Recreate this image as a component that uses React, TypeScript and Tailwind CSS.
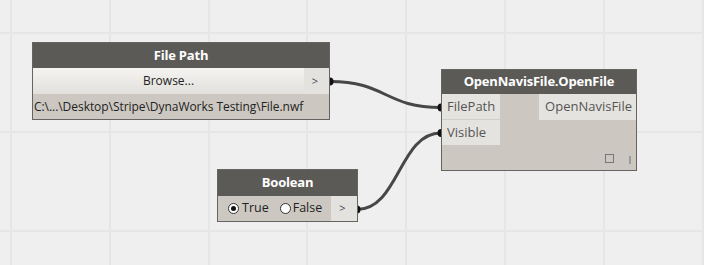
import React from "react";

const font = { fontFamily: '"Open Sans", "Liberation Sans", sans-serif' };

function Grid() {
  const xs: number[] = [];
  const ys: number[] = [];
  for (let i = 0; i < 8; i++) xs.push(10 + i * 98.8);
  for (let i = 0; i < 3; i++) ys.push(32 + i * 98.8);
  return (
    <svg className="absolute inset-0" width={704} height={265}>
      {xs.map((x) => (
        <rect key={"x" + x} x={Math.round(x)} y={0} width={2} height={265} fill="#e6e6e6" />
      ))}
      {ys.map((y) => (
        <rect key={"y" + y} x={0} y={Math.round(y)} width={704} height={2} fill="#e6e6e6" />
      ))}
    </svg>
  );
}

function Wires() {
  return (
    <svg className="absolute inset-0" width={704} height={265}>
      <path d="M330 81.5 C386 81.5, 385 107.5, 441 107.5" stroke="#474747" strokeWidth={3} fill="none" />
      <path d="M357 209.5 C399 209.5, 399 133, 441 133" stroke="#474747" strokeWidth={3} fill="none" />
      <ellipse cx={330} cy={81.5} rx={3.5} ry={4} fill="#111" />
      <ellipse cx={441} cy={107.5} rx={3.5} ry={4} fill="#111" />
      <ellipse cx={441} cy={133} rx={3.5} ry={4} fill="#111" />
      <ellipse cx={357} cy={209.5} rx={3.5} ry={4} fill="#111" />
    </svg>
  );
}

function Radio({ checked }: { checked?: boolean }) {
  return (
    <span className="w-[11px] h-[11px] rounded-full border border-[#333] bg-white flex items-center justify-center shrink-0">
      {checked && <span className="w-[5px] h-[5px] rounded-full bg-[#111]" />}
    </span>
  );
}

export default function App() {
  return (
    <div className="relative w-[704px] h-[265px] bg-[#efefef] overflow-hidden" style={font}>
      <Grid />
      <Wires />

      {/* File Path node */}
      <div className="absolute left-[32px] top-[42px] w-[298px] border border-[#666462] bg-[#ccc8c1] flex flex-col">
        <div className="h-[25px] bg-[#5c5a57] text-white font-bold text-[13px] tracking-[-0.2px] flex items-center justify-center">
          File Path
        </div>
        <div className="h-[26px] flex">
          <div className="flex-1 bg-gradient-to-b from-[#f5f4f2] to-[#e2e0dc] text-[#222] text-[12px] flex items-center justify-center">
            Browse...
          </div>
          <div className="w-[25px] bg-[#e4e2de] text-[#445] text-[11px] flex items-center justify-center pr-[3px]">
            &gt;
          </div>
        </div>
        <div className="h-[25px] text-[#222] text-[12px] flex items-center pl-[1px] whitespace-nowrap tracking-[-0.05px]">
          C:\...\Desktop\Stripe\DynaWorks Testing\File.nwf
        </div>
      </div>

      {/* OpenNavisFile.OpenFile node */}
      <div className="absolute left-[441px] top-[69px] w-[196px] h-[102px] border border-[#666462] bg-[#ccc8c1] flex flex-col">
        <div className="h-[24px] bg-[#5c5a57] text-white font-bold text-[13px] tracking-[-0.2px] flex items-center justify-center">
          OpenNavisFile.OpenFile
        </div>
        <div className="flex">
          <div className="flex flex-col w-[58px]">
            <div className="h-[26px] bg-[#e5e3df] border-b border-[#d2cec8] text-[#555] text-[13px] flex items-center pl-[5px]">
              FilePath
            </div>
            <div className="h-[25px] bg-[#e5e3df] text-[#555] text-[13px] flex items-center pl-[5px]">
              Visible
            </div>
          </div>
          <div className="flex-1" />
          <div className="w-[97px] h-[26px] bg-[#e5e3df] text-[#555] text-[13px] flex items-center justify-end pr-[4px]">
            OpenNavisFile
          </div>
        </div>
        <div className="flex-1 flex items-end justify-end pb-[6px] pr-[5px] gap-[15px]">
          <span className="w-[9px] h-[9px] border border-[#777] mb-[1px]" />
          <span className="flex h-[8px]">
            <span className="w-[1px] h-full bg-[#7f9dbf]" />
            <span className="w-[1px] h-full bg-[#a89c84]" />
          </span>
        </div>
      </div>

      {/* Boolean node */}
      <div className="absolute left-[217px] top-[169px] w-[141px] border border-[#666462] bg-[#ccc8c1] flex flex-col">
        <div className="h-[26px] bg-[#5c5a57] text-white font-bold text-[13px] tracking-[-0.2px] flex items-center justify-center">
          Boolean
        </div>
        <div className="h-[25px] flex">
          <div className="flex-1 flex items-center pl-[10px] text-[12.5px] text-[#222]">
            <Radio checked />
            <span className="ml-[3px]">True</span>
            <span className="ml-[11px] flex items-center">
              <Radio />
              <span className="ml-[2px]">False</span>
            </span>
          </div>
          <div className="w-[26px] bg-[#e4e2de] text-[#445] text-[11px] flex items-center justify-center pr-[3px]">
            &gt;
          </div>
        </div>
      </div>
    </div>
  );
}
